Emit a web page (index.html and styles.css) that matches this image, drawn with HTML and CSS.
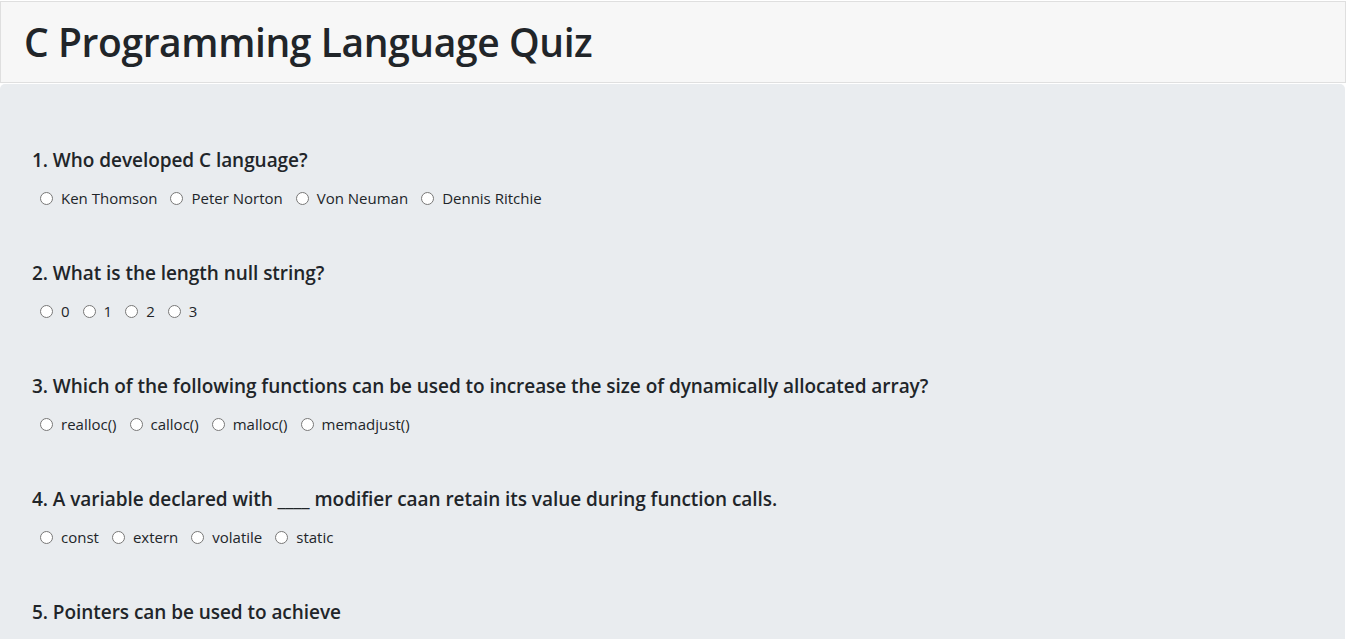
FILE: index.html
```html
<!DOCTYPE html>
<html lang="en">
<head>
<meta charset="utf-8">
<title>C Programming Language Quiz</title>
<link rel="stylesheet" href="styles.css">
</head>
<body>
<header class="quiz-header">
  <h1 class="quiz-title">C Programming Language Quiz</h1>
</header>
<main class="quiz-body">
  <section class="question">
    <h5 class="question-text">1. Who developed C language?</h5>
    <div class="options">
      <label class="option"><input type="radio" name="q1"><span>Ken Thomson</span></label>
      <label class="option"><input type="radio" name="q1"><span>Peter Norton</span></label>
      <label class="option"><input type="radio" name="q1"><span>Von Neuman</span></label>
      <label class="option"><input type="radio" name="q1"><span>Dennis Ritchie</span></label>
    </div>
  </section>
  <section class="question">
    <h5 class="question-text">2. What is the length null string?</h5>
    <div class="options">
      <label class="option"><input type="radio" name="q2"><span>0</span></label>
      <label class="option"><input type="radio" name="q2"><span>1</span></label>
      <label class="option"><input type="radio" name="q2"><span>2</span></label>
      <label class="option"><input type="radio" name="q2"><span>3</span></label>
    </div>
  </section>
  <section class="question">
    <h5 class="question-text">3. Which of the following functions can be used to increase the size of dynamically allocated array?</h5>
    <div class="options">
      <label class="option"><input type="radio" name="q3"><span>realloc()</span></label>
      <label class="option"><input type="radio" name="q3"><span>calloc()</span></label>
      <label class="option"><input type="radio" name="q3"><span>malloc()</span></label>
      <label class="option"><input type="radio" name="q3"><span>memadjust()</span></label>
    </div>
  </section>
  <section class="question">
    <h5 class="question-text">4. A variable declared with ____ modifier caan retain its value during function calls.</h5>
    <div class="options">
      <label class="option"><input type="radio" name="q4"><span>const</span></label>
      <label class="option"><input type="radio" name="q4"><span>extern</span></label>
      <label class="option"><input type="radio" name="q4"><span>volatile</span></label>
      <label class="option"><input type="radio" name="q4"><span>static</span></label>
    </div>
  </section>
  <section class="question">
    <h5 class="question-text">5. Pointers can be used to achieve</h5>
  </section>
</main>
</body>
</html>
```
FILE: styles.css
```css
html, body {
  margin: 0;
  padding: 0;
  background: #ffffff;
}
body {
  font-family: "Open Sans", "Noto Sans", "Liberation Sans", sans-serif;
  color: #212529;
  font-size: 16px;
  line-height: 1.5;
}
.quiz-header {
  margin-top: 1px;
  height: 80px;
  background: #f7f7f7;
  border: 1px solid #dfdfdf;
  display: flex;
  align-items: center;
  padding: 0 23px;
}
.quiz-title {
  margin: 0;
  font-size: 39px;
  font-weight: 600;
  line-height: 1.2;
  letter-spacing: -0.4px;
}
.quiz-body {
  margin: 1px 1px 0 0;
  background: #e9ecef;
  border-radius: 5px 5px 0 0;
  padding: 64px 32px 40px;
  min-height: 600px;
}
.question {
  margin-bottom: 51px;
}
.question-text {
  margin: 0 0 14px;
  font-size: 19px;
  font-weight: 600;
  line-height: 24px;
  letter-spacing: -0.05px;
}
.options {
  display: flex;
  align-items: center;
  gap: 13px;
  padding-left: 8px;
  height: 24px;
}
.option {
  display: flex;
  align-items: center;
  gap: 8px;
  font-size: 15px;
}
.option input {
  margin: 0;
  width: 13px;
  height: 13px;
}
```
